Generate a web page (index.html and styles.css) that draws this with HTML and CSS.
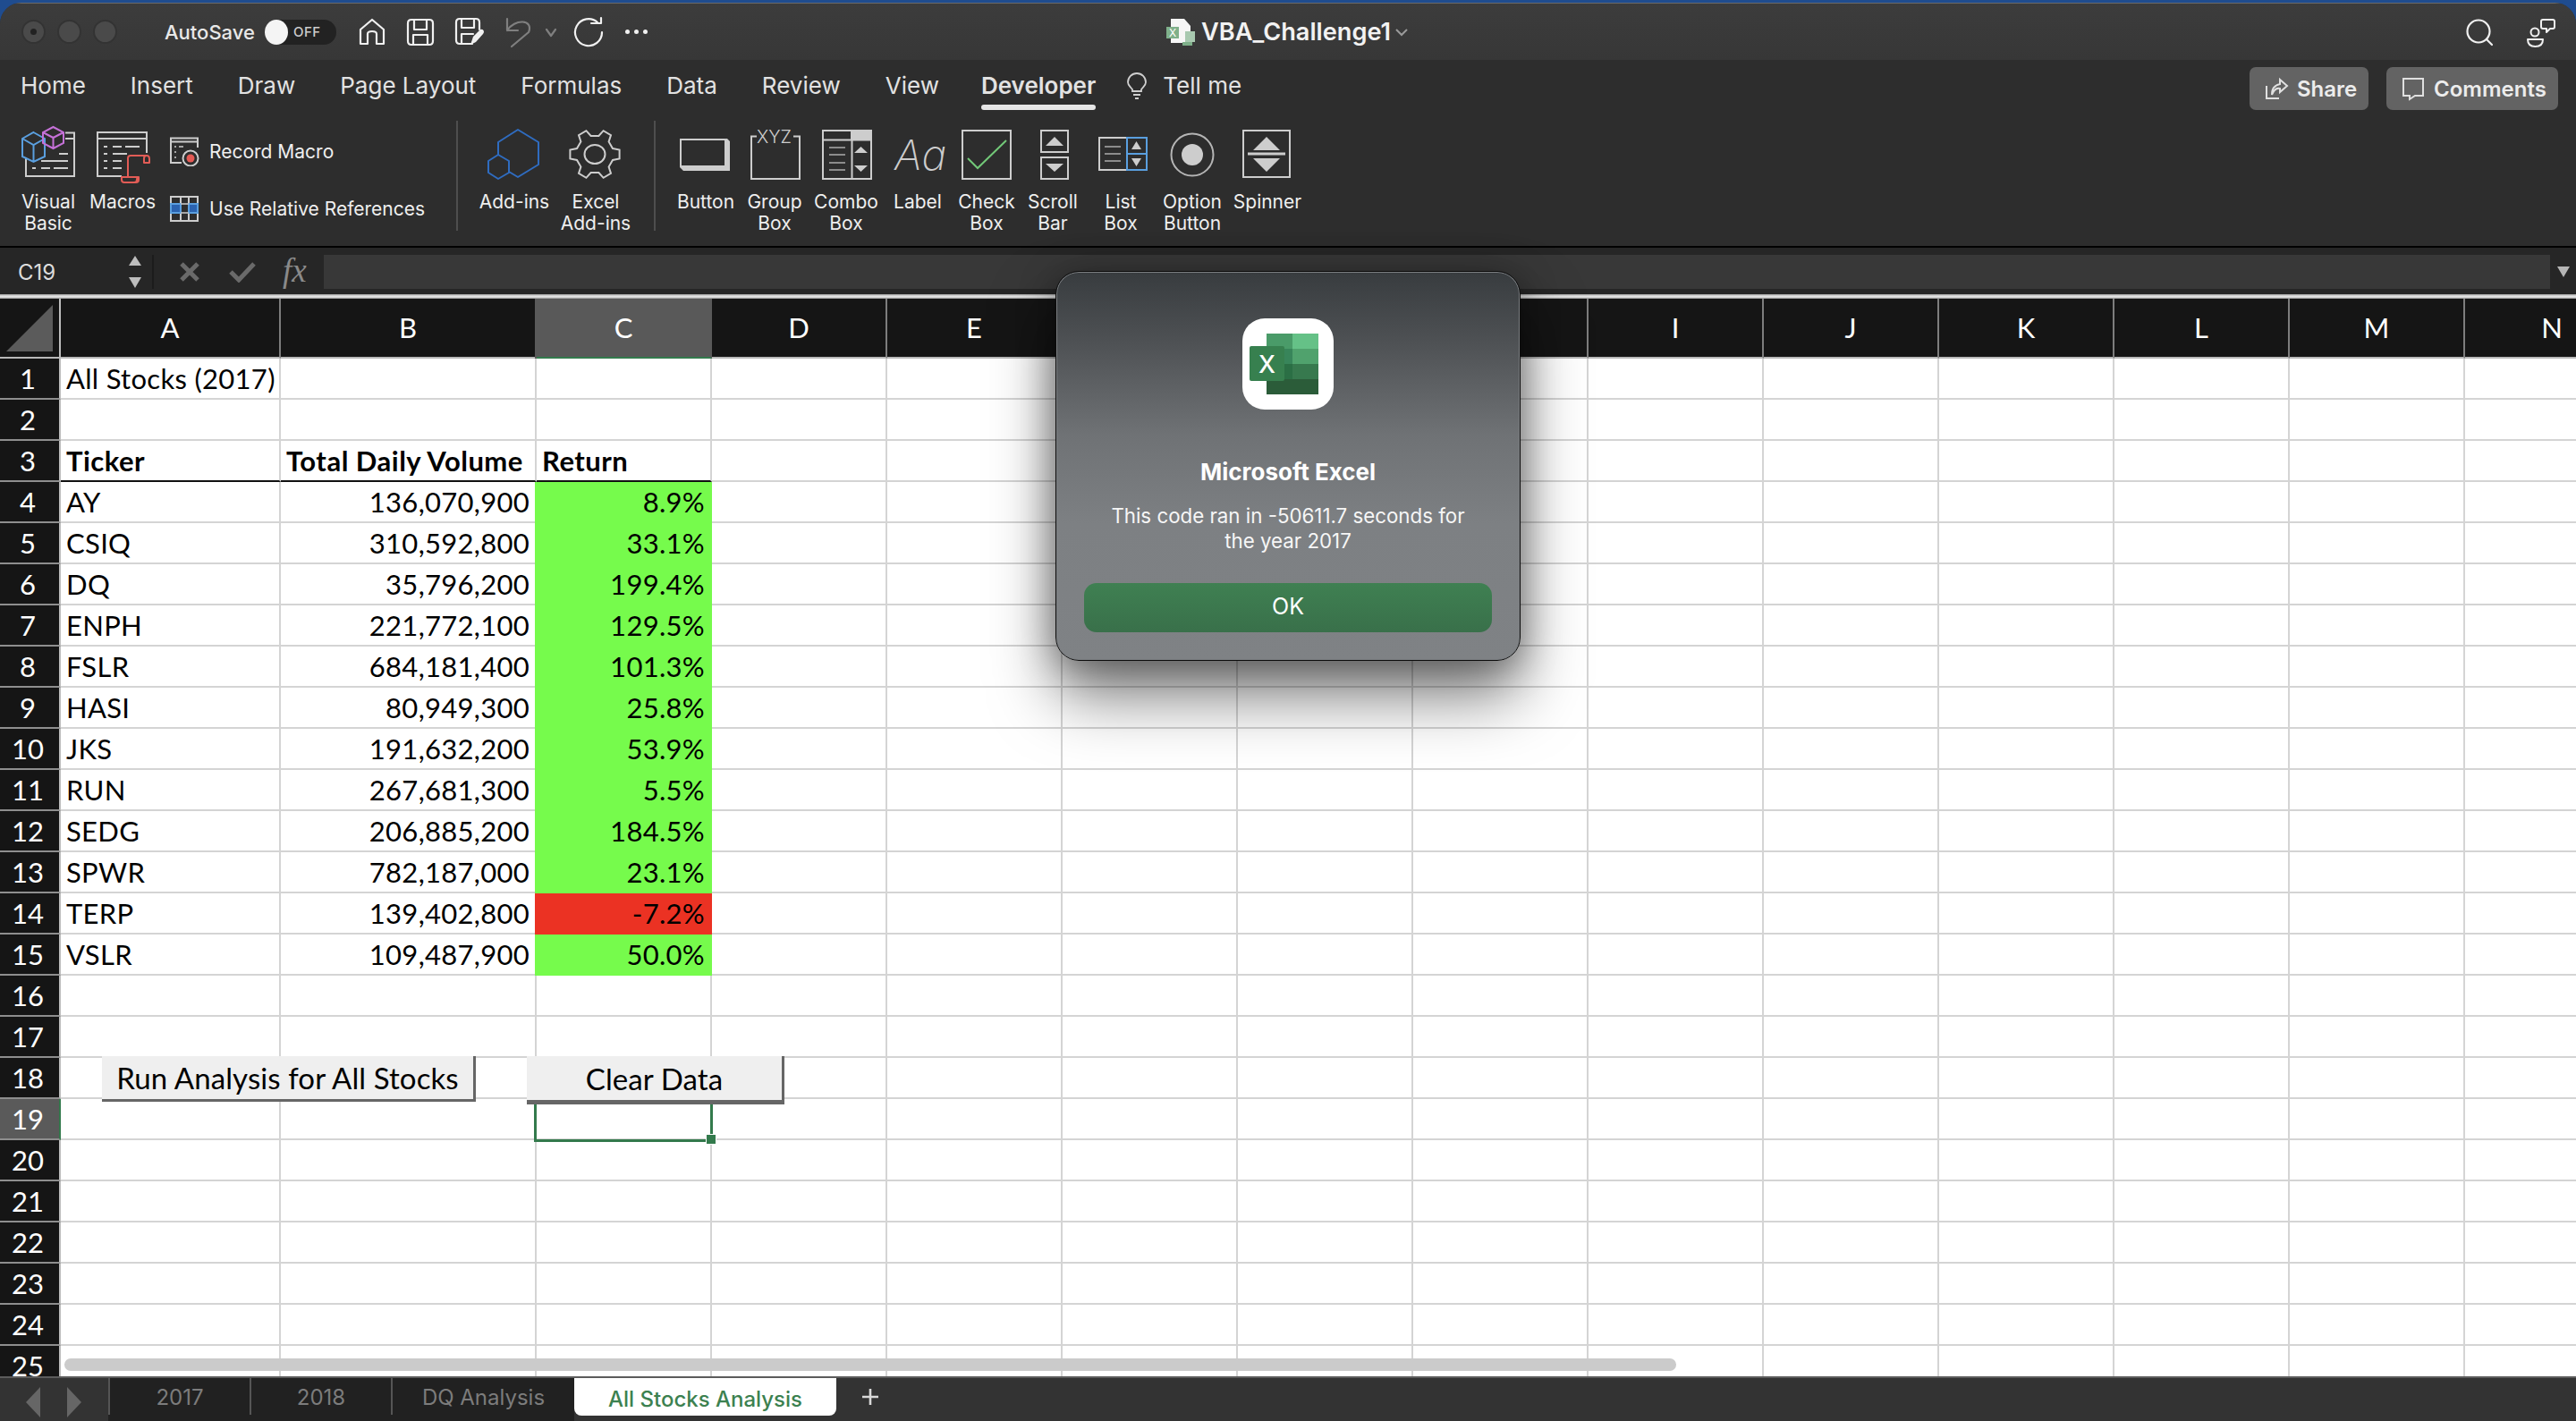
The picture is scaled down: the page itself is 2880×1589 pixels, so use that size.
FILE: index.html
```html
<!DOCTYPE html>
<html lang="en">
<head>
<meta charset="utf-8">
<title>VBA_Challenge1</title>
<link rel="stylesheet" href="styles.css">
</head>
<body>
<div class="window">
  <header class="titlebar">
    <div class="tb-left">
      <span class="light first"></span><span class="light"></span><span class="light"></span>
      <span class="autosave">AutoSave</span>
      <span class="toggle"><span class="knob"></span><span class="off">OFF</span></span>
      <svg class="ti i-home" viewBox="400 17 32 33" width="32" height="33"><path d="M403 47V31L416 20L429 31V47H421V36Q421 33 416 33Q411 33 411 36V47Z"/></svg>
      <svg class="ti i-save" viewBox="454 19 32 32" width="32" height="32"><path d="M460 21H480Q484 21 484 25V45Q484 49 480 49H460Q456 49 456 45V25Q456 21 460 21Z"/><path d="M463 21V32H477V21M462 49V38H478V49"/></svg>
      <svg class="ti i-saveas" viewBox="508 19 34 34" width="34" height="34"><path d="M528 49H514Q510 49 510 45V25Q510 21 514 21H532Q536 21 536 25V33"/><path d="M516 21V31H530V21M516 49V38H529"/><path class="solid" d="M526 50L529 41L537 33Q540 32 541 35Q541 37 540 38L532 47Z"/></svg>
      <svg class="ti dim i-undo" viewBox="563 17 32 36" width="32" height="36"><path d="M567 20V33H579M567 33C575 20 597 20 591 35L572 51"/></svg>
      <svg class="ti dim i-chev" viewBox="608 29 16 12" width="16" height="12"><path d="M611 32L616 39L621 32"/></svg>
      <svg class="ti i-redo" viewBox="640 17 36 36" width="36" height="36"><path d="M668 24A15 15 0 1 0 673 35"/><path d="M661 25H672V19"/></svg>
      <span class="dots"><i></i><i></i><i></i></span>
    </div>
    <div class="tb-title">
      <svg class="doc" viewBox="1303 18 34 34" width="34" height="34"><path class="doc-w" d="M1309 20H1324L1331 28V47H1309Z"/><rect class="doc-x" x="1304" y="29" width="14" height="13"/><text class="doc-xt" x="1307" y="40">X</text><rect class="doc-b" x="1325" y="34" width="11" height="12"/><rect class="doc-g" x="1322" y="46" width="11" height="4"/></svg>
      <span class="docname">VBA_Challenge1</span>
      <svg class="title-chev" viewBox="0 0 16 10" width="16" height="10"><path d="M2 2L8 8L14 2"/></svg>
    </div>
    <div class="tb-right">
      <svg class="ti" viewBox="2756 19 32 32" width="32" height="32"><circle cx="2771" cy="34" r="12.5"/><path d="M2780 43L2786 49"/></svg>
      <svg class="ti i-person" viewBox="2824 18 34 34" width="34" height="34"><circle cx="2834" cy="35" r="4.5"/><path d="M2826 43H2843Q2843 51 2834.500 51Q2826 51 2826 43Z"/><path d="M2843 21H2854Q2856 21 2856 23V29Q2856 31 2854 31H2851L2847 35V31H2843Q2841 31 2841 29V23Q2841 21 2843 21Z"/></svg>
    </div>
  </header>

  <section class="ribbon">
    <nav class="tabs">
      <span class="tab">Home</span>
      <span class="tab">Insert</span>
      <span class="tab">Draw</span>
      <span class="tab">Page Layout</span>
      <span class="tab">Formulas</span>
      <span class="tab">Data</span>
      <span class="tab">Review</span>
      <span class="tab">View</span>
      <span class="tab active">Developer</span>
      <span class="tell">
        <svg viewBox="1260 80 26 32" width="26" height="32" class="bulb"><path d="M1268 102V100C1265 96 1263 95 1263 92A10 10 0 0 1 1283 92C1283 95 1281 96 1278 100V102Z"/><path d="M1269 106H1277M1271 110H1275"/></svg>
        <span class="tab">Tell me</span>
      </span>
      <span class="share-wrap">
        <button class="act act-share">
          <svg viewBox="2532 86 27 26" width="27" height="26"><path d="M2534 96V110H2548"/><path d="M2549 89L2557 96L2549 103V99C2545 98 2542 101 2540 106C2540 99 2544 95 2549 94Z"/></svg>
          Share
        </button>
        <button class="act act-comments">
          <svg viewBox="2685 86 27 27" width="27" height="27"><path d="M2687 88H2709V107H2700L2694 111V107H2687Z"/></svg>
          Comments
        </button>
      </span>
    </nav>

    <div class="tools">
      <div class="tool w88">
        <svg viewBox="10 140 88 70" width="88" height="70">
          <path class="g" d="M73 148.500H83V197H29V176M73 155H83"/>
          <path class="g" d="M66 172H76M46 180H76M36 188H40M46 188H56M60 188H76"/>
          <path class="bl" d="M37.500 148L50 155V175L37.500 181L25 175V155ZM25 155L37.500 162L50 155M37.500 162V181"/>
          <path class="pu" d="M59.500 142L71 148V160L59.500 166L48 160V148ZM48 148L59.500 154L71 148M59.500 154V166"/>
        </svg>
        <span class="lbl">Visual<br>Basic</span>
      </div>
      <div class="tool w78">
        <svg viewBox="98 140 78 70" width="78" height="70">
          <path class="g" d="M164 171V148H109V197H136M109 155H164"/>
          <path class="g" d="M116 164H120M126 164H136M140 164H156M116 172H120M126 172H142M116 180H120M126 180H136M116 188H120M126 188H136"/>
          <path class="rd" d="M143 198V177Q143 174 146 174H164Q167 174 167 178V182H161V177Q161 174 164 174M155 198V201Q155 204 152 204H139Q136 204 136 201V198H155Q153 198 153 201Q153 204 150 204"/>
        </svg>
        <span class="lbl">Macros</span>
      </div>
      <div class="stack">
        <div class="srow">
          <svg viewBox="190 153 33 33" width="33" height="33">
            <path class="g" d="M221 165V154.500H191V182H203M191 158.500H221"/>
            <path class="g thin" d="M195 164H197M200 164H205M195 170H197M195 176H197"/>
            <circle class="g" cx="213" cy="177" r="8.500"/><circle class="rf" cx="213" cy="177" r="4.500"/>
          </svg>
          <span class="slbl">Record Macro</span>
        </div>
        <div class="srow">
          <svg viewBox="190 217 33 33" width="33" height="33">
            <rect class="bf" x="191" y="228" width="11" height="10"/><rect class="bf" x="211" y="228" width="10" height="10"/>
            <path class="g" d="M191 220H221V247H191ZM202 220V228M211 220V228M202 238V247M211 238V247M202 228V238M211 228V238"/>
            <path class="bs" d="M191 228H202V238H191ZM211 228H221V238H211Z"/>
            <path class="g thin" d="M202 228H211M202 238H211"/>
          </svg>
          <span class="slbl">Use Relative References</span>
        </div>
      </div>
      <span class="sep"></span>
      <div class="tool w88 ml19">
        <svg viewBox="531 140 88 70" width="88" height="70">
          <path class="db" d="M557 173V159L579 145L602 159V184L579 198L569 192"/>
          <path class="db" d="M557 173L569 180V193L557 200L546 193V180Z"/>
        </svg>
        <span class="lbl">Add-ins</span>
      </div>
      <div class="tool w94 mr18">
        <svg viewBox="619 140 94 70" width="94" height="70">
          <path class="g" d="M685 166L692.600 167.600V177.400L685 179L680.600 186.500L683 193.900L674.600 198.800L669.400 193H660.600L655.400 198.800L647 193.900L649.400 186.500L645 179L637.400 177.400V167.600L645 166L649.400 158.500L647 151.100L655.400 146.200L660.600 152H669.400L674.600 146.200L683 151.100L680.600 158.500Z"/>
          <ellipse class="g" cx="665" cy="172.500" rx="11.500" ry="10.500"/>
        </svg>
        <span class="lbl">Excel<br>Add-ins</span>
      </div>
      <span class="sep"></span>
      <div class="tool w76 ml18">
        <svg viewBox="751 140 76 70" width="76" height="70">
          <path class="gf" d="M760 155H813L816 158V191H764L760 187ZM762 157V185H810V157Z" fill-rule="evenodd"/>
        </svg>
        <span class="lbl">Button</span>
      </div>
      <div class="tool w78">
        <svg viewBox="827 140 78 70" width="78" height="70">
          <path class="g" d="M846 152.500H840V200H894V152.500H887"/>
          <text class="xyz" x="846" y="160">XYZ</text>
        </svg>
        <span class="lbl">Group<br>Box</span>
      </div>
      <div class="tool w82">
        <svg viewBox="905 140 82 70" width="82" height="70">
          <rect class="gf" x="951" y="146" width="24" height="10"/>
          <path class="g" d="M920 146H974V200H920ZM920 156.500H974M952.500 156V200"/>
          <path class="m" d="M927 165H945M927 173H945M927 182H945M927 190H945"/>
          <path class="gf" d="M962.500 164L970 171H955ZM955 185H970L962.500 192Z"/>
        </svg>
        <span class="lbl">Combo<br>Box</span>
      </div>
      <div class="tool w78">
        <svg viewBox="987 140 78 70" width="78" height="70">
          <text class="aa" x="1000" y="190">Aa</text>
        </svg>
        <span class="lbl">Label</span>
      </div>
      <div class="tool w76">
        <svg viewBox="1065 140 76 70" width="76" height="70">
          <path class="g" d="M1076 146H1130V200H1076Z"/>
          <path class="gr" d="M1082 177L1093 188L1125 157"/>
        </svg>
        <span class="lbl">Check<br>Box</span>
      </div>
      <div class="tool w72">
        <svg viewBox="1141 140 72 70" width="72" height="70">
          <path class="g" d="M1164 146H1194V170H1164ZM1164 176H1194V200H1164Z"/>
          <path class="gf" d="M1179 153L1189 163H1169ZM1169 183H1189L1179 192Z"/>
        </svg>
        <span class="lbl">Scroll<br>Bar</span>
      </div>
      <div class="tool w80">
        <svg viewBox="1213 140 80 70" width="80" height="70">
          <path class="g" d="M1259 154H1229V190H1259"/>
          <path class="m" d="M1235 164H1253M1235 172H1253M1235 180H1253"/>
          <path class="bl" d="M1260 154H1282V190H1260ZM1260 172H1282"/>
          <path class="gf" d="M1270.500 158L1276 167H1265ZM1265 177H1276L1270.500 186Z"/>
        </svg>
        <span class="lbl">List<br>Box</span>
      </div>
      <div class="tool w80">
        <svg viewBox="1293 140 80 70" width="80" height="70">
          <circle class="g2" cx="1333" cy="173" r="23.500"/>
          <circle class="gf" cx="1333" cy="173" r="12"/>
        </svg>
        <span class="lbl">Option<br>Button</span>
      </div>
      <div class="tool w88">
        <svg viewBox="1373 140 88 70" width="88" height="70">
          <path class="g" d="M1390 146H1442V198H1390Z"/>
          <path class="gf" d="M1416 153L1431 168H1401ZM1401 177H1431L1416 192Z"/>
          <path class="g3" d="M1395 172H1437"/>
        </svg>
        <span class="lbl">Spinner</span>
      </div>
    </div>
  </section>

  <section class="formula">
    <div class="namebox">
      <span class="cellref">C19</span>
      <svg class="updown" viewBox="0 0 16 38" width="16" height="38"><path d="M8 1L15 12H1ZM1 25H15L8 37Z"/></svg>
    </div>
    <svg class="fx-x" viewBox="0 0 24 24" width="24" height="24"><path d="M3 3L21 21M21 3L3 21"/></svg>
    <svg class="fx-c" viewBox="0 0 30 24" width="30" height="24"><path d="M2 12L11 21L28 3"/></svg>
    <span class="fx">fx</span>
    <div class="finput"></div>
    <svg class="fx-drop" viewBox="0 0 14 12" width="14" height="12"><path d="M0 0H14L7 12Z"/></svg>
  </section>
  <div class="splitline"></div>

  <main class="sheet">
    <div class="row head">
      <div class="rh corner"><svg viewBox="0 0 52 52" width="52" height="52"><path d="M0 52L52 0V52Z"/></svg></div>
      <div class="ch a">A</div><div class="ch b">B</div><div class="ch c sel">C</div>
      <div class="ch c">D</div><div class="ch c">E</div><div class="ch c">F</div><div class="ch c">G</div><div class="ch c">H</div><div class="ch c">I</div><div class="ch c">J</div><div class="ch c">K</div><div class="ch c">L</div><div class="ch c">M</div><div class="ch c">N</div>
    </div>
    <div class="row"><div class="rh">1</div><div class="cell a">All Stocks (2017)</div><div class="cell b"></div><div class="cell c"></div><div class="rest"></div></div>
    <div class="row"><div class="rh">2</div><div class="cell a"></div><div class="cell b"></div><div class="cell c"></div><div class="rest"></div></div>
    <div class="row hdr"><div class="rh">3</div><div class="cell a bold">Ticker</div><div class="cell b bold">Total Daily Volume</div><div class="cell c bold">Return</div><div class="rest"></div></div>
    <div class="row"><div class="rh">4</div><div class="cell a">AY</div><div class="cell b num">136,070,900</div><div class="cell c num up">8.9%</div><div class="rest"></div></div>
    <div class="row"><div class="rh">5</div><div class="cell a">CSIQ</div><div class="cell b num">310,592,800</div><div class="cell c num up">33.1%</div><div class="rest"></div></div>
    <div class="row"><div class="rh">6</div><div class="cell a">DQ</div><div class="cell b num">35,796,200</div><div class="cell c num up">199.4%</div><div class="rest"></div></div>
    <div class="row"><div class="rh">7</div><div class="cell a">ENPH</div><div class="cell b num">221,772,100</div><div class="cell c num up">129.5%</div><div class="rest"></div></div>
    <div class="row"><div class="rh">8</div><div class="cell a">FSLR</div><div class="cell b num">684,181,400</div><div class="cell c num up">101.3%</div><div class="rest"></div></div>
    <div class="row"><div class="rh">9</div><div class="cell a">HASI</div><div class="cell b num">80,949,300</div><div class="cell c num up">25.8%</div><div class="rest"></div></div>
    <div class="row"><div class="rh">10</div><div class="cell a">JKS</div><div class="cell b num">191,632,200</div><div class="cell c num up">53.9%</div><div class="rest"></div></div>
    <div class="row"><div class="rh">11</div><div class="cell a">RUN</div><div class="cell b num">267,681,300</div><div class="cell c num up">5.5%</div><div class="rest"></div></div>
    <div class="row"><div class="rh">12</div><div class="cell a">SEDG</div><div class="cell b num">206,885,200</div><div class="cell c num up">184.5%</div><div class="rest"></div></div>
    <div class="row"><div class="rh">13</div><div class="cell a">SPWR</div><div class="cell b num">782,187,000</div><div class="cell c num up">23.1%</div><div class="rest"></div></div>
    <div class="row"><div class="rh">14</div><div class="cell a">TERP</div><div class="cell b num">139,402,800</div><div class="cell c num down">-7.2%</div><div class="rest"></div></div>
    <div class="row"><div class="rh">15</div><div class="cell a">VSLR</div><div class="cell b num">109,487,900</div><div class="cell c num up">50.0%</div><div class="rest"></div></div>
    <div class="row"><div class="rh">16</div><div class="cell a"></div><div class="cell b"></div><div class="cell c"></div><div class="rest"></div></div>
    <div class="row"><div class="rh">17</div><div class="cell a"></div><div class="cell b"></div><div class="cell c"></div><div class="rest"></div></div>
    <div class="row"><div class="rh">18</div><div class="cell a"></div><div class="cell b"></div><div class="cell c"></div><div class="rest"></div></div>
    <div class="row"><div class="rh rsel">19</div><div class="cell a"></div><div class="cell b"></div><div class="cell c"></div><div class="rest"></div></div>
    <div class="row"><div class="rh">20</div><div class="cell a"></div><div class="cell b"></div><div class="cell c"></div><div class="rest"></div></div>
    <div class="row"><div class="rh">21</div><div class="cell a"></div><div class="cell b"></div><div class="cell c"></div><div class="rest"></div></div>
    <div class="row"><div class="rh">22</div><div class="cell a"></div><div class="cell b"></div><div class="cell c"></div><div class="rest"></div></div>
    <div class="row"><div class="rh">23</div><div class="cell a"></div><div class="cell b"></div><div class="cell c"></div><div class="rest"></div></div>
    <div class="row"><div class="rh">24</div><div class="cell a"></div><div class="cell b"></div><div class="cell c"></div><div class="rest"></div></div>
    <div class="row"><div class="rh">25</div><div class="cell a"></div><div class="cell b"></div><div class="cell c"></div><div class="rest"></div></div>

    <div class="selection"><span class="handle"></span></div>
    <button class="xlbtn run">Run Analysis for All Stocks</button>
    <button class="xlbtn clear">Clear Data</button>
    <div class="hscroll"></div>
  </main>

  <footer class="sheetbar">
    <div class="nav">
      <svg viewBox="0 0 16 34" width="16" height="34"><path d="M16 0V34L0 17Z"/></svg>
      <svg viewBox="0 0 16 34" width="16" height="34"><path d="M0 0V34L16 17Z"/></svg>
    </div>
    <div class="stabs">
      <span class="stab s158">2017</span>
      <span class="stab s158">2018</span>
      <span class="stab s205">DQ Analysis</span>
    </div>
    <span class="stab-on">All Stocks Analysis</span>
    <svg class="plus" viewBox="0 0 20 20" width="20" height="20"><path d="M10 1V19M1 10H19"/></svg>
  </footer>
</div>

<div class="dialog">
  <svg class="xlicon" viewBox="1389 356 102 102" width="102" height="102">
    <rect class="ic-bg" x="1389" y="356" width="102" height="102" rx="25"/>
    <rect class="c1" x="1416" y="373" width="29" height="17"/><rect class="c2" x="1445" y="373" width="29" height="17"/>
    <rect class="c3" x="1416" y="390" width="29" height="17"/><rect class="c4" x="1445" y="390" width="29" height="17"/>
    <rect class="c5" x="1416" y="407" width="29" height="17"/><rect class="c6" x="1445" y="407" width="29" height="17"/>
    <rect class="c7" x="1416" y="424" width="58" height="17"/>
    <rect class="c8" x="1397" y="387" width="39" height="39" rx="2"/>
    <text class="xl" x="1416.500" y="417" text-anchor="middle">X</text>
  </svg>
  <h1 class="dtitle">Microsoft Excel</h1>
  <p class="dmsg">This code ran in -50611.7 seconds for the year 2017</p>
  <button class="dok">OK</button>
</div>
</body>
</html>
```
FILE: styles.css
```css
* { box-sizing: border-box; }
html, body { margin: 0; padding: 0; }
body {
  position: relative;
  width: 2880px;
  height: 1589px;
  overflow: hidden;
  background: #1f4c8f;
  font-family: "Inter", "Noto Sans", sans-serif;
  color: #eee;
}
.window {
  margin-top: 3px;
  height: 1586px;
  display: flex;
  flex-direction: column;
  border-radius: 24px 24px 0 0;
  overflow: hidden;
  background: #2d2d2d;
}

/* title bar */
.titlebar {
  height: 64px;
  flex: none;
  display: grid;
  grid-template-columns: 1304px 1fr auto;
  align-items: center;
  background: linear-gradient(#3c3c3c, #373737);
  border-top: 1px solid #6a6a6a;
}
.tb-left { display: flex; align-items: center; padding-left: 24px; }
.light {
  width: 27px; height: 27px; border-radius: 50%;
  background: #4a4a4a; border: 2px solid #333;
  margin-right: 13px; position: relative; flex: none;
}
.light.first::after {
  content: ""; position: absolute; left: 8px; top: 8px;
  width: 7px; height: 7px; border-radius: 50%; background: #222;
}
.autosave { font-size: 22px; font-weight: 500; color: #e8e8e8; margin-left: 40px; width: 100px; white-space: nowrap; }
.toggle {
  margin-left: 12px; width: 80px; height: 28px; border-radius: 14px;
  background: #222; display: flex; align-items: center; flex: none;
}
.knob { width: 26px; height: 28px; border-radius: 50%; background: #f4f4f4; flex: none; }
.off { font-size: 15px; font-weight: 500; color: #ccc; margin-left: 6px; letter-spacing: .5px; }
.ti { fill: none; stroke: #f0f0f0; stroke-width: 2.2; flex: none; stroke-linecap: round; stroke-linejoin: round; }
.ti .solid { fill: #f0f0f0; stroke: none; }
.ti.dim { stroke: #7f7f7f; }
.i-home { margin-left: 24px; }
.i-save { margin-left: 22px; }
.i-saveas { margin-left: 22px; }
.i-undo { margin-left: 21px; }
.i-chev { margin-left: 13px; }
.i-redo { margin-left: 16px; }
.dots { display: flex; gap: 5px; margin-left: 23px; }
.dots i { width: 5px; height: 5px; border-radius: 50%; background: #f0f0f0; }
.tb-title { display: flex; align-items: center; }
.doc { flex: none; margin-left: -1px; }
.doc-w { fill: #f6f6f6; }
.doc-x { fill: #7fb08a; }
.doc-xt { font-size: 12px; fill: #fff; font-family: "Inter", sans-serif; }
.doc-b { fill: #a8c9b0; }
.doc-g { fill: #7fb08a; }
.docname { font-size: 27.2px; font-weight: 600; color: #f2f2f2; margin-left: 6px; }
.title-chev { fill: none; stroke: #9a9a9a; stroke-width: 2; margin-left: 4px; }
.tb-right { display: flex; align-items: center; gap: 36px; padding-right: 22px; }
.i-person { stroke-width: 2; }

/* ribbon */
.ribbon { height: 208px; flex: none; background: #2d2d2d; }
.tabs { display: flex; gap: 50px; padding: 8px 20px 0 23px; height: 56px; }
.tab { display: block; font-size: 26px; line-height: 42px; color: #e2e2e2; white-space: nowrap; }
.tab.active {
  font-weight: 600; position: relative; height: 48px; margin-left: -3px;
}
.tab.active::after {
  content: ""; position: absolute; left: 0; right: 0; bottom: 0;
  height: 6px; border-radius: 3px; background: #e6e6e6;
}
.tell { display: flex; align-items: flex-start; gap: 16px; margin-left: -17px; }
.bulb { fill: none; stroke: #cfcfcf; stroke-width: 1.8; margin-top: 5px; }
.share-wrap { margin-left: auto; display: flex; gap: 20px; }
.act {
  height: 48px; border: 0; border-radius: 7px; background: #636363;
  color: #ececec; font: 600 24px "Inter", sans-serif;
  display: flex; align-items: center; gap: 9px; padding: 0;
}
.act svg { fill: none; stroke: #e0e0e0; stroke-width: 2; }
.act-share { width: 133px; padding-left: 17px; }
.act-comments { width: 192px; padding-left: 17px; }

.tools { display: flex; align-items: flex-start; padding: 17px 0 0 10px; }
.tool { display: flex; flex-direction: column; align-items: center; flex: none; }
.tool svg { display: block; }
.w72 { width: 72px; } .w76 { width: 76px; } .w78 { width: 78px; } .w80 { width: 80px; }
.w82 { width: 82px; } .w88 { width: 88px; } .w94 { width: 94px; }
.ml18 { margin-left: 18px; } .ml19 { margin-left: 19px; } .mr18 { margin-right: 18px; }
.lbl { margin-top: 4px; font-size: 21px; line-height: 24px; text-align: center; color: #efefef; white-space: nowrap; }
.stack { width: 334px; padding: 13px 0 0 14px; display: flex; flex-direction: column; gap: 31px; flex: none; }
.srow { display: flex; align-items: center; gap: 11px; height: 33px; }
.slbl { font-size: 21px; color: #efefef; white-space: nowrap; }
.sep { width: 2px; height: 123px; margin-top: -5px; background: #4e4e4e; flex: none; }
.g, .g2, .g3, .bl, .pu, .rd, .db, .gr, .m, .bs { fill: none; stroke-width: 2; }
.g { stroke: #cdcdcd; }
.g.thin { stroke-width: 1.5; }
.g2 { stroke: #b4b4b4; }
.g3 { stroke: #cdcdcd; stroke-width: 3; }
.bl, .bs { stroke: #5a9fdf; }
.pu { stroke: #c571d8; }
.rd { stroke: #e25c56; stroke-linejoin: round; }
.db { stroke: #2f6cc0; stroke-linejoin: round; }
.gr { stroke: #72c878; }
.m { stroke: #8c8c8c; }
.gf { fill: #cdcdcd; }
.rf { fill: #e45a54; }
.bf { fill: #2b63b0; }
.xyz { font: 300 20px "Inter", sans-serif; fill: #cdcdcd; }
.aa { font: italic 200 47px "Inter", sans-serif; fill: #cdcdcd; }

/* formula bar */
.formula {
  height: 54px; flex: none; display: flex; align-items: flex-start;
  background: #262626; border-top: 2px solid #000; padding-top: 8px;
}
.namebox { width: 172px; height: 38px; display: flex; align-items: center; justify-content: space-between; padding: 0 11px 0 20px; border-right: 2px solid #1c1c1c; flex: none; }
.cellref { font-size: 24px; color: #dcdcdc; }
.updown { fill: #bdbdbd; }
.fx-x { fill: none; stroke: #6a6a6a; stroke-width: 5; margin: 7px 0 0 28px; flex: none; }
.fx-c { fill: none; stroke: #6a6a6a; stroke-width: 5; margin: 7px 0 0 32px; flex: none; }
.fx { font: italic 37px/36px "Liberation Serif", serif; color: #8a8a8a; margin-left: 30px; width: 46px; flex: none; }
.finput { width: 2489px; height: 38px; background: #383838; flex: none; }
.fx-drop { fill: #b5b5b5; margin: 13px 0 0 8px; flex: none; }
.splitline { height: 5px; flex: none; background: linear-gradient(#9b9b9b, #e6e6e6 45%, #d4d4d4 70%, #8c8c8c); }

/* sheet */
.sheet {
  position: relative; height: 1205px; flex: none; overflow: hidden;
  background: #fff; font-family: "Lato", "Carlito", sans-serif; color: #000;
}
.row { display: flex; height: 46px; }
.row.head { height: 67px; }
.rh {
  width: 68px; flex: none; background: #151515; color: #fff;
  border-right: 2px solid #bdbdbd; border-bottom: 2px solid #8e8e8e;
  font-size: 31px; line-height: 44px; text-align: center; padding-right: 4px;
}
.corner { display: flex; align-items: center; justify-content: center; border-bottom-color: #b8b8b8; padding: 0; }
.corner svg { fill: #5b5b5b; display: block; }
.rh.rsel { background: #5a5a5a; border-right-color: #337a4c; }
.ch {
  flex: none; background: #151515; color: #fff; height: 67px;
  border-right: 2px solid #7d7d7d; border-bottom: 2px solid #b8b8b8;
  font-size: 31px; line-height: 65px; text-align: center;
}
.ch.a, .cell.a { width: 246px; }
.ch.b, .cell.b { width: 286px; }
.ch.c, .cell.c { width: 196px; }
.ch.sel { background: #595959; border-bottom-color: #337a4c; border-right-color: #595959; box-shadow: -2px 0 0 #595959; }
.cell {
  flex: none; height: 46px; padding: 0 6px;
  border-right: 2px solid #d4d4d4; border-bottom: 2px solid #d4d4d4;
  font-size: 31px; line-height: 44px; white-space: nowrap; letter-spacing: .3px;
}
.bold { font-weight: 700; letter-spacing: .5px; }
.num { text-align: right; }
.up { background: #76fb4c; border-color: #76fb4c; box-shadow: -2px 0 0 #76fb4c; }
.down { background: #eb3223; border-color: #eb3223; box-shadow: -2px 0 0 #eb3223; }
.rest {
  flex: 1; height: 46px; border-bottom: 2px solid #d4d4d4;
  background: repeating-linear-gradient(to right, #fff 0, #fff 194px, #d4d4d4 194px, #d4d4d4 196px);
}
.row.hdr .cell { border-bottom-color: #111; }
.selection {
  position: absolute; left: 597px; top: 893px; width: 200px; height: 50px;
  border: 3px solid #337a4c;
}
.handle {
  position: absolute; right: -6px; bottom: -5px; width: 10px; height: 10px;
  background: #337a4c; outline: 1px solid #fff;
}
.xlbtn {
  position: absolute; background: #efefef; color: #000;
  border: 0; border-right: 3px solid #666; border-bottom: 3px solid #666;
  font: 33px "Lato", sans-serif; padding: 0; text-align: center; letter-spacing: .1px;
}
.run { left: 114px; top: 847px; width: 418px; height: 51px; }
.clear { left: 589px; top: 847px; width: 288px; height: 54px; border-bottom-width: 5px; }
.hscroll { position: absolute; left: 72px; top: 1185px; width: 1802px; height: 14px; border-radius: 7px; background: #cbcbcb; }

/* sheet tabs */
.sheetbar {
  height: 47px; flex: 1; display: flex; align-items: flex-start;
  background: #333; border-top: 2px solid #5c5c5c;
}
.nav { width: 121px; height: 48px; padding: 10px 30px 0 29px; display: flex; justify-content: space-between; flex: none; }
.nav svg { fill: #666; }
.stabs { display: flex; background: #212121; height: 48px; flex: none; }
.stab {
  height: 41px; border-left: 2px solid #555; color: #7c7c7c; font-size: 24px;
  line-height: 44px; text-align: center; flex: none;
}
.s158 { width: 158px; } .s205 { width: 205px; }
.stab-on {
  width: 293px; height: 42px; background: #fff; border-radius: 0 0 8px 8px; flex: none;
  color: #3c8150; font-size: 24px; font-weight: 500; line-height: 47px; text-align: center;
}
.plus { fill: none; stroke: #d8d8d8; stroke-width: 2.6; margin: 11px 0 0 28px; flex: none; }

/* dialog */
.dialog {
  position: absolute; left: 1180px; top: 303px; width: 520px; height: 436px;
  border-radius: 26px; border: 1.5px solid #0c0c0c;
  background: linear-gradient(#383c3f 0, #4e5154 18%, #6f7275 42%, #7d8083 65%, #7f8285 100%);
  box-shadow: inset 0 0 0 1px #7a7d80, 0 40px 70px rgba(0, 0, 0, .5), 0 6px 40px rgba(0, 0, 0, .35);
  display: flex; flex-direction: column; align-items: center; padding-top: 52px;
}
.xlicon { display: block; flex: none; }
.ic-bg { fill: #fff; }
.c1 { fill: #4a9b69; } .c2 { fill: #65c187; } .c3 { fill: #38855a; } .c4 { fill: #50a26d; }
.c5 { fill: #2b6f45; } .c6 { fill: #37794e; } .c7 { fill: #2b5c39; }
.c8 { fill: #37804f; }
.xl { font: 500 27px "Inter", sans-serif; fill: #fff; }
.dtitle { margin: 54px 0 0; font-size: 26px; line-height: 32px; font-weight: 700; color: #fff; }
.dmsg { margin: 19px 0 0; width: 415px; font-size: 22.3px; line-height: 28px; text-align: center; color: #f6f6f6; }
.dok {
  margin-top: 33px; width: 456px; height: 55px; border: 0; border-radius: 14px;
  background: linear-gradient(#3f8052, #39704a); color: #fff; font: 25px/50px "Inter", sans-serif; padding: 0 0 3px;
}
```
